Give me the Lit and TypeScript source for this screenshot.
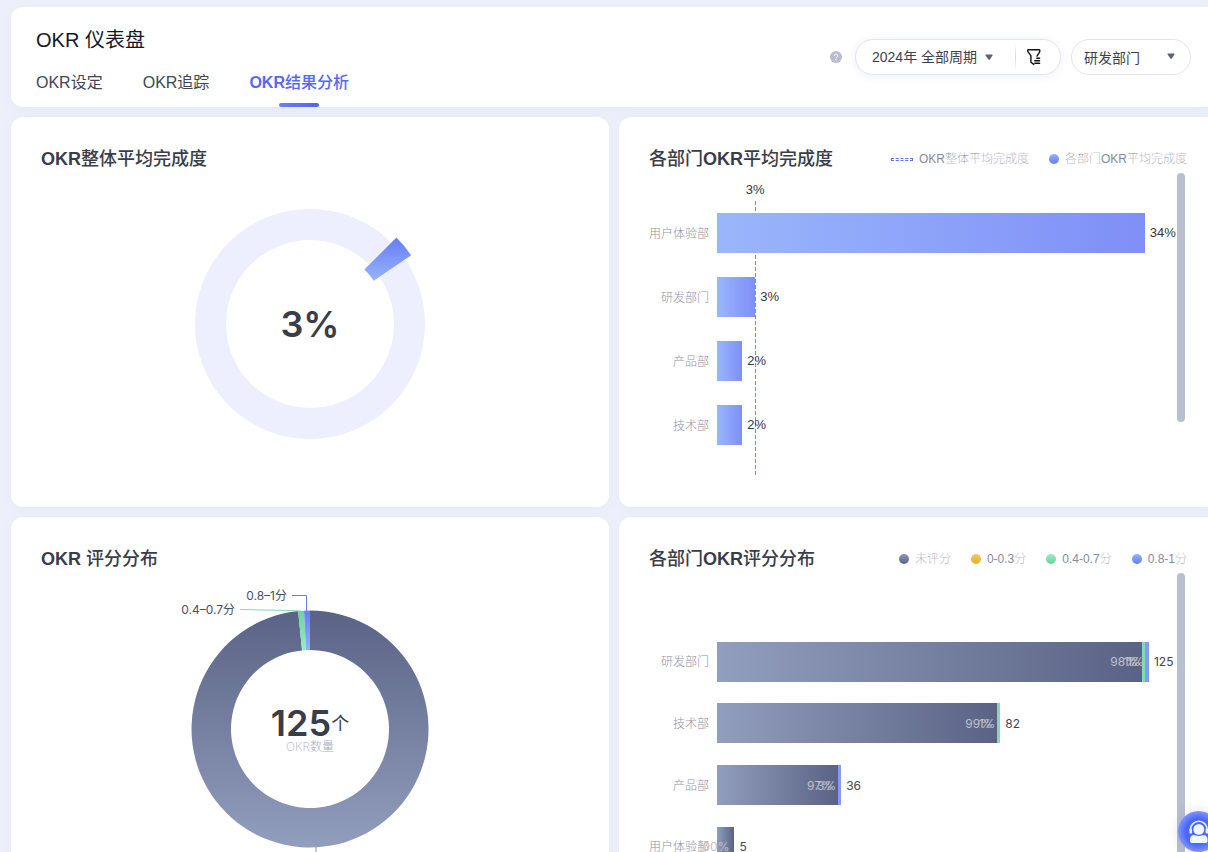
import { LitElement, html, svg, css } from "lit";
import { customElement, property } from "lit/decorators.js";

interface Bar {
  label: string;
  value: string;
  share: number;
}

interface Segment {
  tone: string;
  share: number;
  text: string;
}

interface StackRow {
  label: string;
  total: string;
  share: number;
  segments: Segment[];
}

interface LegendItem {
  tone: string;
  label: string;
}

const completion: Bar[] = [
  { label: "用户体验部", value: "34%", share: 93 },
  { label: "研发部门", value: "3%", share: 8.3 },
  { label: "产品部", value: "2%", share: 5.5 },
  { label: "技术部", value: "2%", share: 5.5 },
];

const scores: StackRow[] = [
  {
    label: "研发部门",
    total: "125",
    share: 93.9,
    segments: [
      { tone: "slate", share: 98.4, text: "98%" },
      { tone: "green", share: 0.8, text: "1%" },
      { tone: "blue", share: 0.8, text: "1%" },
    ],
  },
  {
    label: "技术部",
    total: "82",
    share: 61.6,
    segments: [
      { tone: "slate", share: 98.8, text: "99%" },
      { tone: "green", share: 1.2, text: "1%" },
    ],
  },
  {
    label: "产品部",
    total: "36",
    share: 27,
    segments: [
      { tone: "slate", share: 97.2, text: "97%" },
      { tone: "blue", share: 2.8, text: "3%" },
    ],
  },
  {
    label: "用户体验部",
    total: "5",
    share: 3.8,
    segments: [{ tone: "slate", share: 100, text: "100%" }],
  },
];

/** Path of a ring sector; angles are degrees clockwise from twelve o'clock. */
function sector(cx: number, cy: number, r0: number, r1: number, from: number, to: number): string {
  const at = (r: number, deg: number) => {
    const a = (deg * Math.PI) / 180;
    return `${(cx + r * Math.sin(a)).toFixed(2)} ${(cy - r * Math.cos(a)).toFixed(2)}`;
  };
  const large = to - from > 180 ? 1 : 0;
  return `M${at(r1, from)}A${r1} ${r1} 0 ${large} 1 ${at(r1, to)}L${at(r0, to)}A${r0} ${r0} 0 ${large} 0 ${at(r0, from)}Z`;
}

@customElement("okr-header")
export class OkrHeader extends LitElement {
  static styles = css`
    :host {
      display: flex;
      justify-content: space-between;
      height: 100px;
      box-sizing: border-box;
      padding: 0 26px 0 25px;
      background: #fff;
      border-radius: 12px;
      box-shadow: 0 4px 10px rgba(220, 228, 235, 0.4);
    }
    .left {
      display: flex;
      flex-direction: column;
      justify-content: space-between;
    }
    h1 {
      margin: 19px 0 0;
      font-size: 20px;
      line-height: 28px;
      font-weight: 400;
      color: #15181f;
    }
    nav {
      display: flex;
      gap: 40px;
    }
    .tab {
      display: flex;
      flex-direction: column;
      align-items: center;
      gap: 8px;
      font-size: 16px;
      line-height: 24px;
      color: #404653;
      text-decoration: none;
    }
    .tab::after {
      content: "";
      width: 40px;
      height: 4px;
      border-radius: 2px;
    }
    .tab.active {
      color: #5468ff;
      font-weight: 700;
    }
    .tab.active .cjk {
      font-weight: 500;
    }
    .tab.active::after {
      background: linear-gradient(90deg, #6580ff, #4f63f8);
    }
    .tools {
      display: flex;
      align-items: center;
      gap: 10px;
    }
    button {
      display: flex;
      padding: 0;
      border: 0;
      background: none;
    }
    .help {
      margin-right: 3px;
    }
    .pill {
      display: flex;
      align-items: center;
      box-sizing: border-box;
      height: 36px;
      border: 1px solid #e3e5ed;
      border-radius: 18px;
      background: #fff;
    }
    .period {
      width: 206px;
      box-shadow: 0 1px 8px rgba(90, 100, 200, 0.1);
    }
    .dept {
      width: 120px;
    }
    .field {
      display: grid;
      align-items: center;
      flex: 1;
    }
    .field > * {
      grid-area: 1 / 1;
    }
    .caret {
      justify-self: end;
      pointer-events: none;
    }
    .period .caret {
      margin-right: 22px;
    }
    .dept .caret {
      margin-right: 15px;
      margin-bottom: 3px;
    }
    select {
      appearance: none;
      border: 0;
      background: none;
      width: 100%;
      height: 34px;
      margin: 0;
      padding: 0 0 0 16px;
      font: inherit;
      font-size: 14px;
      color: #3d424e;
    }
    .dept select {
      padding: 2px 0 0 12px;
    }
    .rule {
      width: 1px;
      height: 28px;
      background: linear-gradient(#fff, #d5d8e2, #fff);
    }
    .filter {
      margin: 0 16px 0 10px;
    }
  `;

  render() {
    const caret = svg`<path d="M0.6 1.6Q0.2 0.6 1.2 0.6H7Q8 0.6 7.5 1.6L4.8 5.4Q4.1 6.2 3.4 5.4Z" fill="#5d6372"/>`;
    return html`
      <div class="left">
        <h1>OKR 仪表盘</h1>
        <nav>
          <a class="tab" href="#set">OKR设定</a>
          <a class="tab" href="#track">OKR追踪</a>
          <a class="tab active" href="#result" aria-current="page"
            ><span>OKR<span class="cjk">结果分析</span></span></a
          >
        </nav>
      </div>
      <div class="tools">
        <button class="help" aria-label="帮助">
          <svg width="12" height="12" viewBox="0 0 12 12">
            <circle cx="6" cy="6" r="6" fill="#b8bdd0" />
            <path d="M4.3 4.8a1.7 1.7 0 1 1 2.6 1.4Q6 6.7 6 7.3" fill="none" stroke="#fff" />
            <circle cx="6" cy="9" r="0.7" fill="#fff" />
          </svg>
        </button>
        <div class="pill period">
          <div class="field">
            <select aria-label="周期">
              <option>2024年 全部周期</option>
            </select>
            <svg class="caret" width="8" height="6" viewBox="0 0 8 6">${caret}</svg>
          </div>
          <span class="rule"></span>
          <button class="filter" aria-label="筛选">
            <svg width="18" height="18" viewBox="0 0 18 18" fill="none" stroke="#111" stroke-width="1.4" stroke-linecap="round" stroke-linejoin="round">
              <path d="M11 8.2L13.5 4.2Q14.4 1.7 13 1.7H2.6Q1 1.9 2.1 3.8L4.9 7.6V14.2L7.8 16.4" />
              <path d="M10.8 10.2H13.6M8.8 12.7H13.6M8.8 15.2H13.6" />
            </svg>
          </button>
        </div>
        <div class="pill dept">
          <div class="field">
            <select aria-label="部门">
              <option>研发部门</option>
            </select>
            <svg class="caret" width="8" height="6" viewBox="0 0 8 6">${caret}</svg>
          </div>
        </div>
      </div>
    `;
  }
}

@customElement("okr-card")
export class OkrCard extends LitElement {
  @property() lead = "";
  @property() latin = "OKR";
  @property() rest = "";
  @property({ attribute: false }) legend: LegendItem[] = [];

  static styles = css`
    :host {
      display: block;
      box-sizing: border-box;
      height: 390px;
      padding: 30px;
      background: #fff;
      border-radius: 12px;
      box-shadow: 0 2px 6px rgba(225, 230, 240, 0.5);
    }
    header {
      display: flex;
      justify-content: space-between;
      align-items: center;
      height: 24px;
    }
    h2 {
      margin: 0;
      font-size: 18px;
      line-height: 24px;
      font-weight: 500;
      color: #383d49;
    }
    b {
      font-weight: 700;
    }
    ul {
      display: flex;
      gap: 20px;
      margin: 0;
      padding: 0;
      list-style: none;
      font-size: 12px;
      line-height: 18px;
      font-weight: 100;
      color: #858a9b;
    }
    li {
      display: flex;
      align-items: center;
      gap: 6px;
    }
    .mark {
      width: 10px;
      height: 10px;
      border-radius: 50%;
    }
    .slate {
      background: linear-gradient(#8c98b9, #5a6385);
    }
    .amber {
      background: linear-gradient(#f5c860, #eaac30);
    }
    .green {
      background: linear-gradient(#98ecc8, #6bd3a0);
    }
    .blue {
      background: linear-gradient(#95b2fc, #657cf8);
    }
    .dash {
      box-sizing: border-box;
      width: 22px;
      height: 3px;
      border: 1px dashed #5a72f5;
      border-radius: 0;
    }
  `;

  render() {
    return html`
      <header>
        <h2>${this.lead}<b>${this.latin}</b>${this.rest}</h2>
        ${this.legend.length
          ? html`<ul>
              ${this.legend.map((l) => html`<li><span class="mark ${l.tone}"></span>${l.label}</li>`)}
            </ul>`
          : null}
      </header>
      <slot></slot>
    `;
  }
}

@customElement("app-root")
export class AppRoot extends LitElement {
  static styles = css`
    :host {
      display: block;
      position: relative;
      box-sizing: border-box;
      height: 100vh;
      overflow: hidden;
      padding: 7px 0 0 11px;
      background: #edf0fa;
      font-family: "Liberation Sans", "Noto Sans CJK SC", sans-serif;
    }
    .page {
      display: grid;
      gap: 10px;
      margin-right: -9px;
    }
    .cards {
      display: grid;
      grid-template-columns: 1fr 1fr;
      gap: 10px;
    }
    .ring {
      display: block;
      margin: 0 auto;
      overflow: visible;
    }
    .big {
      font: 600 36px Inter, "Noto Sans CJK SC", sans-serif;
      fill: #383d49;
    }
    .unit {
      font-size: 18px;
      font-weight: 400;
    }
    .sub {
      font: 200 12px Inter, "Noto Sans CJK SC", sans-serif;
      fill: #a9adba;
    }
    .callout {
      font: 400 12px Inter, "Noto Sans CJK SC", sans-serif;
      fill: #4a4f5c;
    }
    .body {
      display: flex;
      margin: 2px 2px 0 0;
    }
    .chart {
      flex: 1;
      display: grid;
      position: relative;
    }
    .single {
      grid-auto-rows: 64px;
      align-content: start;
      padding: 28px 0 20px;
    }
    .stacked {
      grid-template-rows: repeat(6, 1fr);
      height: 370px;
      padding-top: 58px;
    }
    .row {
      display: grid;
      grid-template-columns: 60px 1fr;
      column-gap: 8px;
      align-items: center;
    }
    .label {
      justify-self: end;
      white-space: nowrap;
      font-size: 12px;
      padding-bottom: 2px;
      font-weight: 300;
      color: #8e93a4;
    }
    .track {
      display: flex;
      align-items: center;
      gap: 5px;
      font-size: 13px;
      color: #33363e;
    }
    .stacked .track {
      font: 400 12px Inter, sans-serif;
      color: #42464f;
    }
    .bar {
      display: flex;
      flex: none;
      height: 40px;
    }
    .single .bar {
      background: linear-gradient(90deg, #9ab6fb, #7f8ff7);
      position: relative;
    }
    .value {
      position: relative;
    }
    .single .value {
      padding-bottom: 2px;
    }
    .seg {
      display: flex;
      align-items: center;
      justify-content: flex-end;
      box-sizing: border-box;
      flex: none;
      color: #bfc1c8;
    }
    .tag {
      margin-right: 5px;
    }
    .seg.slate {
      background: linear-gradient(90deg, #929ebd, #5a6385);
    }
    .seg.green {
      background: #7fdcb0;
    }
    .seg.blue {
      background: #849af8;
    }
    /* Average marker drawn over the plot area */
    .average {
      position: absolute;
      inset: 8px 0 0 68px;
      pointer-events: none;
    }
    .marker {
      display: flex;
      flex-direction: column;
      align-items: center;
      gap: 2px;
      width: 40px;
      height: 296px;
      font-size: 13px;
      line-height: 18px;
      color: #33363e;
    }
    .marker::after {
      content: "";
      flex: 1;
      width: 1px;
      background: repeating-linear-gradient(#7187e5 0 4px, transparent 4px 6px);
    }
    .thumb {
      width: 8px;
      height: 249px;
      border-radius: 4px;
      background: #b8bfd0;
    }
    .thumb.long {
      height: 320px;
    }
    .service {
      position: absolute;
      right: -11px;
      bottom: 0;
      width: 41px;
      height: 41px;
      padding: 0;
      border: 0;
      border-radius: 50%;
      background: radial-gradient(#4a68ff 45%, #8496f9 72%);
      box-shadow: 0 0 12px rgba(80, 90, 140, 0.18);
    }
    .service svg {
      display: block;
      margin: auto;
    }
  `;

  private averageRing() {
    return html`
      <svg class="ring" width="300" height="300" viewBox="0 0 300 300" role="img" aria-label="3%">
        <defs>
          <linearGradient id="wedge" x1="0" y1="0" x2="0" y2="1">
            <stop offset="0" stop-color="#667df7" />
            <stop offset="1" stop-color="#97b3fc" />
          </linearGradient>
        </defs>
        <circle cx="150" cy="153" r="99.5" fill="none" stroke="#edeefe" stroke-width="31" />
        <path d=${sector(150, 153, 77, 122.3, 45, 55.8)} fill="url(#wedge)" />
        <text class="big" x="150" y="166" text-anchor="middle">3%</text>
      </svg>
    `;
  }

  private scoreRing() {
    const grad = (id: string, a: string, b: string) => svg`
      <linearGradient id=${id} x1="0" y1="0" x2="0" y2="1">
        <stop offset="0" stop-color=${a} /><stop offset="1" stop-color=${b} />
      </linearGradient>`;
    return html`
      <svg class="ring" width="300" height="300" viewBox="0 0 300 300" role="img" aria-label="OKR评分分布">
        <defs>
          ${grad("slate", "#5a6385", "#929ebd")} ${grad("green", "#6bd3a0", "#98ecc8")}
          ${grad("blue", "#657cf8", "#95b2fc")}
        </defs>
        <path d=${sector(150, 158, 79, 118.5, 0, 354.24)} fill="url(#slate)" />
        <path d=${sector(150, 158, 79, 118.5, 354.24, 357.12)} fill="url(#green)" />
        <path d=${sector(150, 158, 79, 118.5, 357.12, 360)} fill="url(#blue)" />
        <path d="M80 38.5L128 39.5L141 40" fill="none" stroke="#7fdcb0" />
        <path d="M132 24.5H146.5V40" fill="none" stroke="#657cf8" />
        <path d="M156 276V300" fill="none" stroke="#8792b2" />
        <text class="callout" x="75" y="43" text-anchor="end">0.4–0.7分</text>
        <text class="callout" x="127" y="29" text-anchor="end">0.8–1分</text>
        <text class="big" x="150" y="165" text-anchor="middle">125<tspan class="unit" dy="-6">个</tspan></text>
        <text class="sub" x="150" y="180" text-anchor="middle">OKR数量</text>
      </svg>
    `;
  }

  render() {
    return html`
      <div class="page">
        <okr-header></okr-header>
        <main class="cards">
          <okr-card rest="整体平均完成度">${this.averageRing()}</okr-card>
          <okr-card
            lead="各部门"
            rest="平均完成度"
            .legend=${[
              { tone: "dash", label: "OKR整体平均完成度" },
              { tone: "blue", label: "各部门OKR平均完成度" },
            ]}
          >
            <div class="body">
              <div class="chart single">
                <div class="average">
                  <div class="marker" style="margin-left: calc(8.3% - 20px)">3%</div>
                </div>
                ${completion.map(
                  (b) => html`<div class="row">
                    <span class="label">${b.label}</span>
                    <div class="track">
                      <span class="bar" style="width: ${b.share}%"></span>
                      <span class="value">${b.value}</span>
                    </div>
                  </div>`
                )}
              </div>
              <span class="thumb"></span>
            </div>
          </okr-card>
          <okr-card latin="OKR " rest="评分分布">${this.scoreRing()}</okr-card>
          <okr-card
            lead="各部门"
            rest="评分分布"
            .legend=${[
              { tone: "slate", label: "未评分" },
              { tone: "amber", label: "0-0.3分" },
              { tone: "green", label: "0.4-0.7分" },
              { tone: "blue", label: "0.8-1分" },
            ]}
          >
            <div class="body">
              <div class="chart stacked">
                ${scores.map(
                  (r) => html`<div class="row">
                    <span class="label">${r.label}</span>
                    <div class="track">
                      <span class="bar" style="width: ${r.share}%">
                        ${r.segments.map(
                          (s) => html`<span class="seg ${s.tone}" style="width: ${s.share}%"
                            ><span class="tag">${s.text}</span></span
                          >`
                        )}
                      </span>
                      <span class="value">${r.total}</span>
                    </div>
                  </div>`
                )}
              </div>
              <span class="thumb long"></span>
            </div>
          </okr-card>
        </main>
      </div>
      <button class="service" aria-label="在线客服">
        <svg width="22" height="24" viewBox="0 0 22 24">
          <path d="M2.5 11V9.5a8.3 8.3 0 0 1 16.6 0V11" fill="none" stroke="#e9f3ff" stroke-width="1.6" />
          <rect x="1.4" y="8.6" width="2.6" height="5" rx="1.2" fill="#e9f3ff" />
          <rect x="17.6" y="8.6" width="2.6" height="5" rx="1.2" fill="#e9f3ff" />
          <circle cx="10.8" cy="9.4" r="5.4" fill="#eef8ff" />
          <path d="M2 20Q2 15 6.5 15Q10.8 17 15.1 15Q19.6 15 19.6 20V21Q19.6 23 17.6 23H4Q2 23 2 21Z" fill="#eef8ff" />
        </svg>
      </button>
    `;
  }
}
